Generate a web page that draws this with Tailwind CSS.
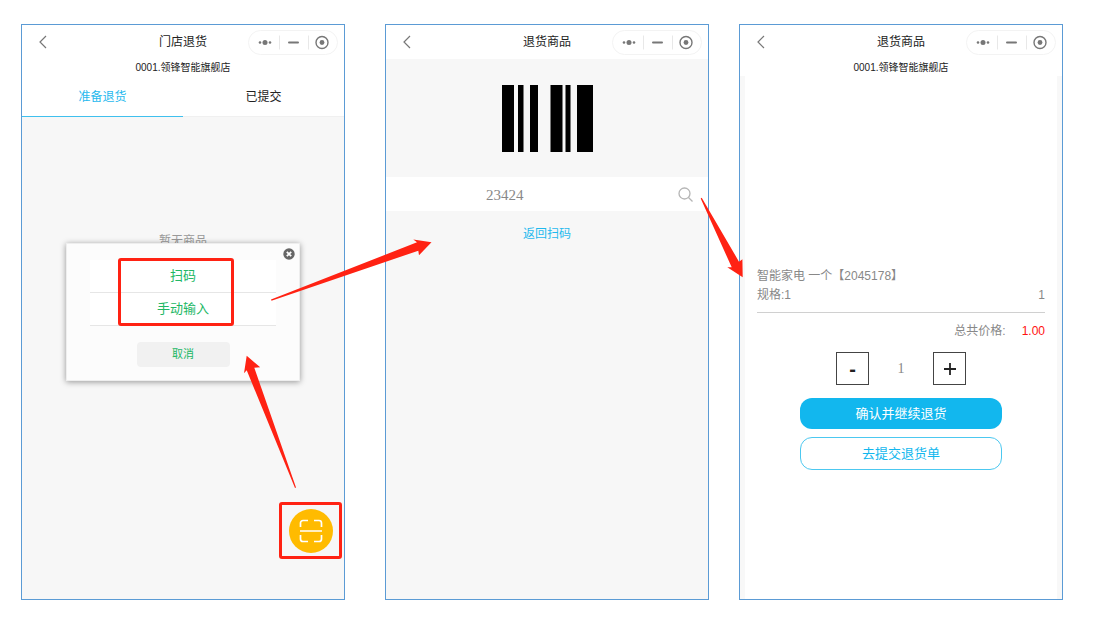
<!DOCTYPE html>
<html lang="zh-CN">
<head>
<meta charset="utf-8">
<meta name="viewport" content="width=device-width, initial-scale=1">
<title>门店退货</title>
<script src="https://cdn.jsdelivr.net/npm/@tailwindcss/browser@4"></script>
</head>
<body class="bg-white font-['Liberation_Sans','Noto_Sans_CJK_SC',sans-serif] text-xs text-[#222]">

<svg class="hidden" aria-hidden="true">
  <symbol id="back" viewBox="0 0 10 14"><path d="M8 1 2 7l6 6" fill="none" stroke="#777" stroke-width="1.2"/></symbol>
  <symbol id="capsule" viewBox="0 0 90 25">
    <rect x=".5" y=".5" width="89" height="24" rx="12" fill="#fff" stroke="#f3f3f3"/>
    <g fill="#777"><circle cx="12" cy="12.5" r="1.3"/><circle cx="17" cy="12.5" r="2.5"/><circle cx="22" cy="12.5" r="1.3"/><rect x="40" y="11.5" width="11" height="2" rx="1"/><circle cx="74" cy="12.5" r="2.4"/></g>
    <circle cx="74" cy="12.5" r="6" fill="none" stroke="#777" stroke-width="1.4"/>
    <path d="M31.5 5.500v14M60.500 5.500v14" stroke="#e8e8e8"/>
  </symbol>
</svg>

<main class="relative flex min-h-screen items-start pt-6 pr-[35px] pb-9 pl-[21px]">

  <section class="relative min-h-[576px] flex-1 border border-[#5b9bd5] bg-[#f7f7f7]">
    <header class="bg-white">
      <div class="grid h-[34px] grid-cols-3 items-center px-1.5">
        <button aria-label="返回" class="w-fit pl-2.5"><svg class="h-3.5 w-2.5"><use href="#back"/></svg></button>
        <h1 class="text-center leading-5">门店退货</h1>
        <button aria-label="菜单" class="w-fit justify-self-end"><svg class="block h-[25px] w-[90px]"><use href="#capsule"/></svg></button>
      </div>
      <p class="text-center text-[10px] leading-[17px]">0001.领锋智能旗舰店</p>
      <nav class="grid h-[41px] grid-cols-2 text-center leading-[42px]">
        <a href="#ready" class="h-[41px] border-b border-[#3fc0ee] text-[#1fb9ee]">准备退货</a>
        <a href="#done" class="h-[41px] border-b border-[#f0f0f0]">已提交</a>
      </nav>
    </header>
    <p class="mt-[116px] text-center leading-4 text-[#999]">暂无商品</p>

    <div role="dialog" aria-label="选择方式" class="absolute inset-x-11 top-[218px] h-[138px] border border-[#eee] bg-[#fcfcfc] px-[23px] pt-4 text-center text-[#22b765] shadow-[0_1px_6px_rgba(0,0,0,0.4)]">
      <button aria-label="关闭" class="absolute top-1 right-1"><svg class="block size-3" viewBox="0 0 12 12"><circle cx="6" cy="6" r="5.700" fill="#666"/><path d="m3.800 3.800 4.400 4.400m0-4.400L3.800 8.200" stroke="#fff" stroke-width="1.700"/></svg></button>
      <button class="block h-[33px] w-full border-b border-[#e6e6e6] bg-white text-[13px]">扫码</button>
      <button class="block h-[33px] w-full border-b border-[#e6e6e6] bg-white text-[13px]">手动输入</button>
      <button class="mt-4 h-[25px] w-1/2 rounded-sm bg-[#f1f1f1] text-[11px]">取消</button>
      <span class="absolute top-3.5 left-[51px] h-[68px] w-[116px] rounded-[3px] border-3 border-[#ff2213]"></span>
    </div>

    <div class="absolute right-0.5 bottom-10 flex h-[57px] w-[63px] items-center justify-center rounded-[3px] border-3 border-[#ff2213]">
      <button aria-label="扫描" class="flex size-11 items-center justify-center rounded-full bg-[#ffbb00]">
        <svg class="size-6" viewBox="0 0 24 24" fill="none" stroke="#fff" stroke-width="1.700"><path d="M1 12h22M1.500 8V4a2.500 2.500 0 0 1 2.500-2.500h5M15 1.500h5A2.500 2.500 0 0 1 22.500 4v4M1.500 16v4A2.500 2.500 0 0 0 4 22.500h5M15 22.500h5a2.500 2.500 0 0 0 2.500-2.500v-4"/></svg>
      </button>
    </div>
  </section>

  <section class="ml-10 min-h-[576px] flex-1 border border-[#5b9bd5] bg-[#f7f7f7]">
    <header class="grid h-[34px] grid-cols-3 items-center bg-white px-1.5">
      <button aria-label="返回" class="w-fit pl-2.5"><svg class="h-3.5 w-2.5"><use href="#back"/></svg></button>
      <h2 class="text-center leading-5">退货商品</h2>
      <button aria-label="菜单" class="w-fit justify-self-end"><svg class="block h-[25px] w-[90px]"><use href="#capsule"/></svg></button>
    </header>
    <div class="flex h-[118px] items-center justify-center">
      <svg class="h-[67px] w-[91px]" viewBox="0 0 91 67"><path d="M0 0h12v67H0zM16 0h5.500v67H16zM28 0h8v67h-8zM48.500 0h12v67h-12zM63.500 0h5v67h-5zM75 0h16v67H75z"/></svg>
    </div>
    <div class="flex h-[34px] items-center bg-white pr-[15px]">
      <input aria-label="商品条码" value="23424" class="h-full w-full min-w-0 flex-1 bg-transparent pt-0.5 pl-[100px] font-['Liberation_Serif',serif] text-[15px] text-[#888] outline-none">
      <button aria-label="搜索"><svg class="block size-[15px]" viewBox="0 0 15 15" fill="none" stroke="#b5b5b5" stroke-width="1.300"><circle cx="6.500" cy="6.500" r="5.500"/><path d="m10.500 10.500 4 4"/></svg></button>
    </div>
    <p class="mt-[15px] text-center leading-4"><a href="#scan" class="text-[#1fb9ee]">返回扫码</a></p>
  </section>

  <section class="ml-[30px] flex min-h-[576px] flex-1 flex-col border border-[#5b9bd5] bg-white">
    <header>
      <div class="grid h-[34px] grid-cols-3 items-center px-1.5">
        <button aria-label="返回" class="w-fit pl-2.5"><svg class="h-3.5 w-2.5"><use href="#back"/></svg></button>
        <h2 class="text-center leading-5">退货商品</h2>
        <button aria-label="菜单" class="w-fit justify-self-end"><svg class="block h-[25px] w-[90px]"><use href="#capsule"/></svg></button>
      </div>
      <p class="text-center text-[10px] leading-[17px]">0001.领锋智能旗舰店</p>
    </header>
    <div class="flex-1 border-x-5 border-[#f8f8f8] px-3 pt-[191px] text-[#888]">
      <p class="leading-[19px]">智能家电 一个【2045178】</p>
      <p class="flex justify-between border-b border-[#d0d0d0] pb-[7px] leading-[19px]"><span>规格:1</span><span>1</span></p>
      <p class="mt-2 flex justify-end gap-4 leading-5"><span>总共价格:</span><span class="text-[#ff1111]">1.00</span></p>
      <div class="mt-[11px] flex justify-center">
        <button aria-label="减少" class="size-[33px] border border-[#444] text-xl font-bold leading-none text-[#222]">-</button>
        <input aria-label="数量" value="1" class="w-16 text-center font-['Liberation_Serif',serif] text-sm text-[#888] outline-none">
        <button aria-label="增加" class="flex size-[33px] items-center justify-center border border-[#444] text-xl leading-none text-[#222]"><svg class="size-3" viewBox="0 0 12 12"><path d="M0 6h12M6 0v12" stroke="#222" stroke-width="1.800"/></svg></button>
      </div>
      <div class="mx-8 mt-[13px] flex flex-col gap-2 px-[11px] text-[13px]">
        <button class="h-[31px] w-full rounded-xl bg-[#12b7ee] text-white">确认并继续退货</button>
        <button class="h-[33px] w-full rounded-xl border border-[#4cc8f0] bg-white text-[#12b7ee]">去提交退货单</button>
      </div>
    </div>
  </section>

  <svg class="pointer-events-none absolute top-0 left-0 h-[637px] w-[1098px]" viewBox="0 0 1098 637" fill="#ff2213" aria-hidden="true">
    <path d="M271 299.500 417 242.300 413.300 239.600 431.500 242.300 419 255.200 418.300 250.700 271.500 300.800z"/>
    <path d="M295 488 246.700 370.300 244 373.200 246.700 355.800 260.200 367.200 254.300 367.700 296 487.600z"/>
    <path d="M700.700 198.400 731.700 267.300 727.300 267.200 742.700 277.200 742.400 259.200 739 261.700 701.700 197.800z"/>
  </svg>
</main>
</body>
</html>
